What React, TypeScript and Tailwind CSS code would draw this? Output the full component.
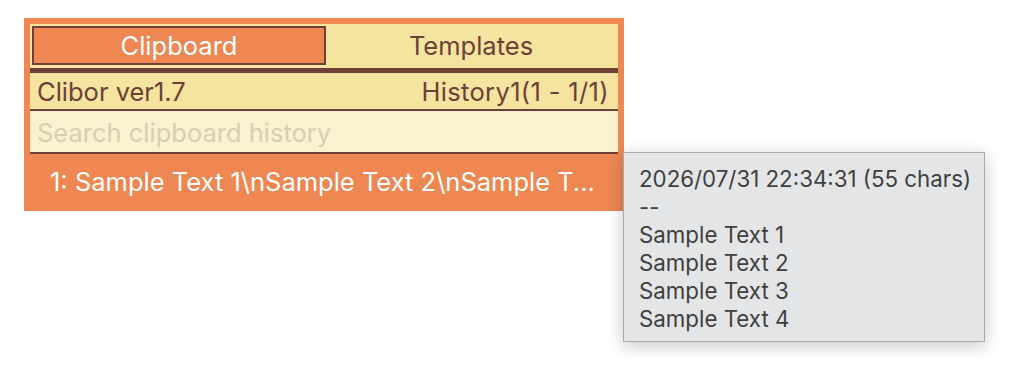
import React from "react";

export default function App() {
  const font = { fontFamily: "Inter, 'Noto Sans', sans-serif" };
  return (
    <div className="relative w-[1020px] h-[380px] bg-white" style={font}>
      <div className="pl-[24px] pt-[18px]">
        <div className="w-[600px] bg-[#ee8751] px-[6px] pt-[6px] flex flex-col">
          <div className="h-[44px] bg-[#f5e3a0] pt-[2px] pb-[3px] px-[2px] flex">
            <div className="flex-1 border-2 border-[#6e4036] bg-[#ee8751] text-white text-[25.5px] pt-[2px] flex items-center justify-center">
              Clipboard
            </div>
            <div className="flex-1 text-[#6e4036] text-[25.5px] pt-[2px] flex items-center justify-center">
              Templates
            </div>
          </div>
          <div className="h-[5px] bg-[#6e4036]" />
          <div className="h-[36px] bg-[#f5e3a0] pl-[7px] pr-[9px] pt-[3px] flex items-center justify-between text-[#6e4036] text-[25.5px]">
            <span>Clibor ver1.7</span>
            <span className="tracking-[0.35px]">History1(1 - 1/1)</span>
          </div>
          <div className="h-[2px] bg-[#6e4036]" />
          <div className="h-[41px] bg-[#fbf0d0] px-[7px] pt-[3px] flex items-center text-[#d8cfb0] text-[25.5px]">
            Search clipboard history
          </div>
          <div className="h-[2px] bg-[#6e4036]" />
          <div className="h-[57px] pl-[20px] flex items-center text-white text-[25.5px] whitespace-nowrap">
            1: Sample Text 1\nSample Text 2\nSample T...
          </div>
        </div>
      </div>
      <div className="absolute left-[623px] top-[152px] w-[362px] h-[190px] bg-[#e4e5e7] border border-[#a9a9a9] pl-[15px] pt-[12px] text-[#3f3f3f] text-[22.3px] leading-[28px] shadow-[0_4px_16px_rgba(0,0,0,0.22)]">
        <div>2026/07/31 22:34:31 (55 chars)</div>
        <div>--</div>
        <div>Sample Text 1</div>
        <div>Sample Text 2</div>
        <div>Sample Text 3</div>
        <div>Sample Text 4</div>
      </div>
    </div>
  );
}
